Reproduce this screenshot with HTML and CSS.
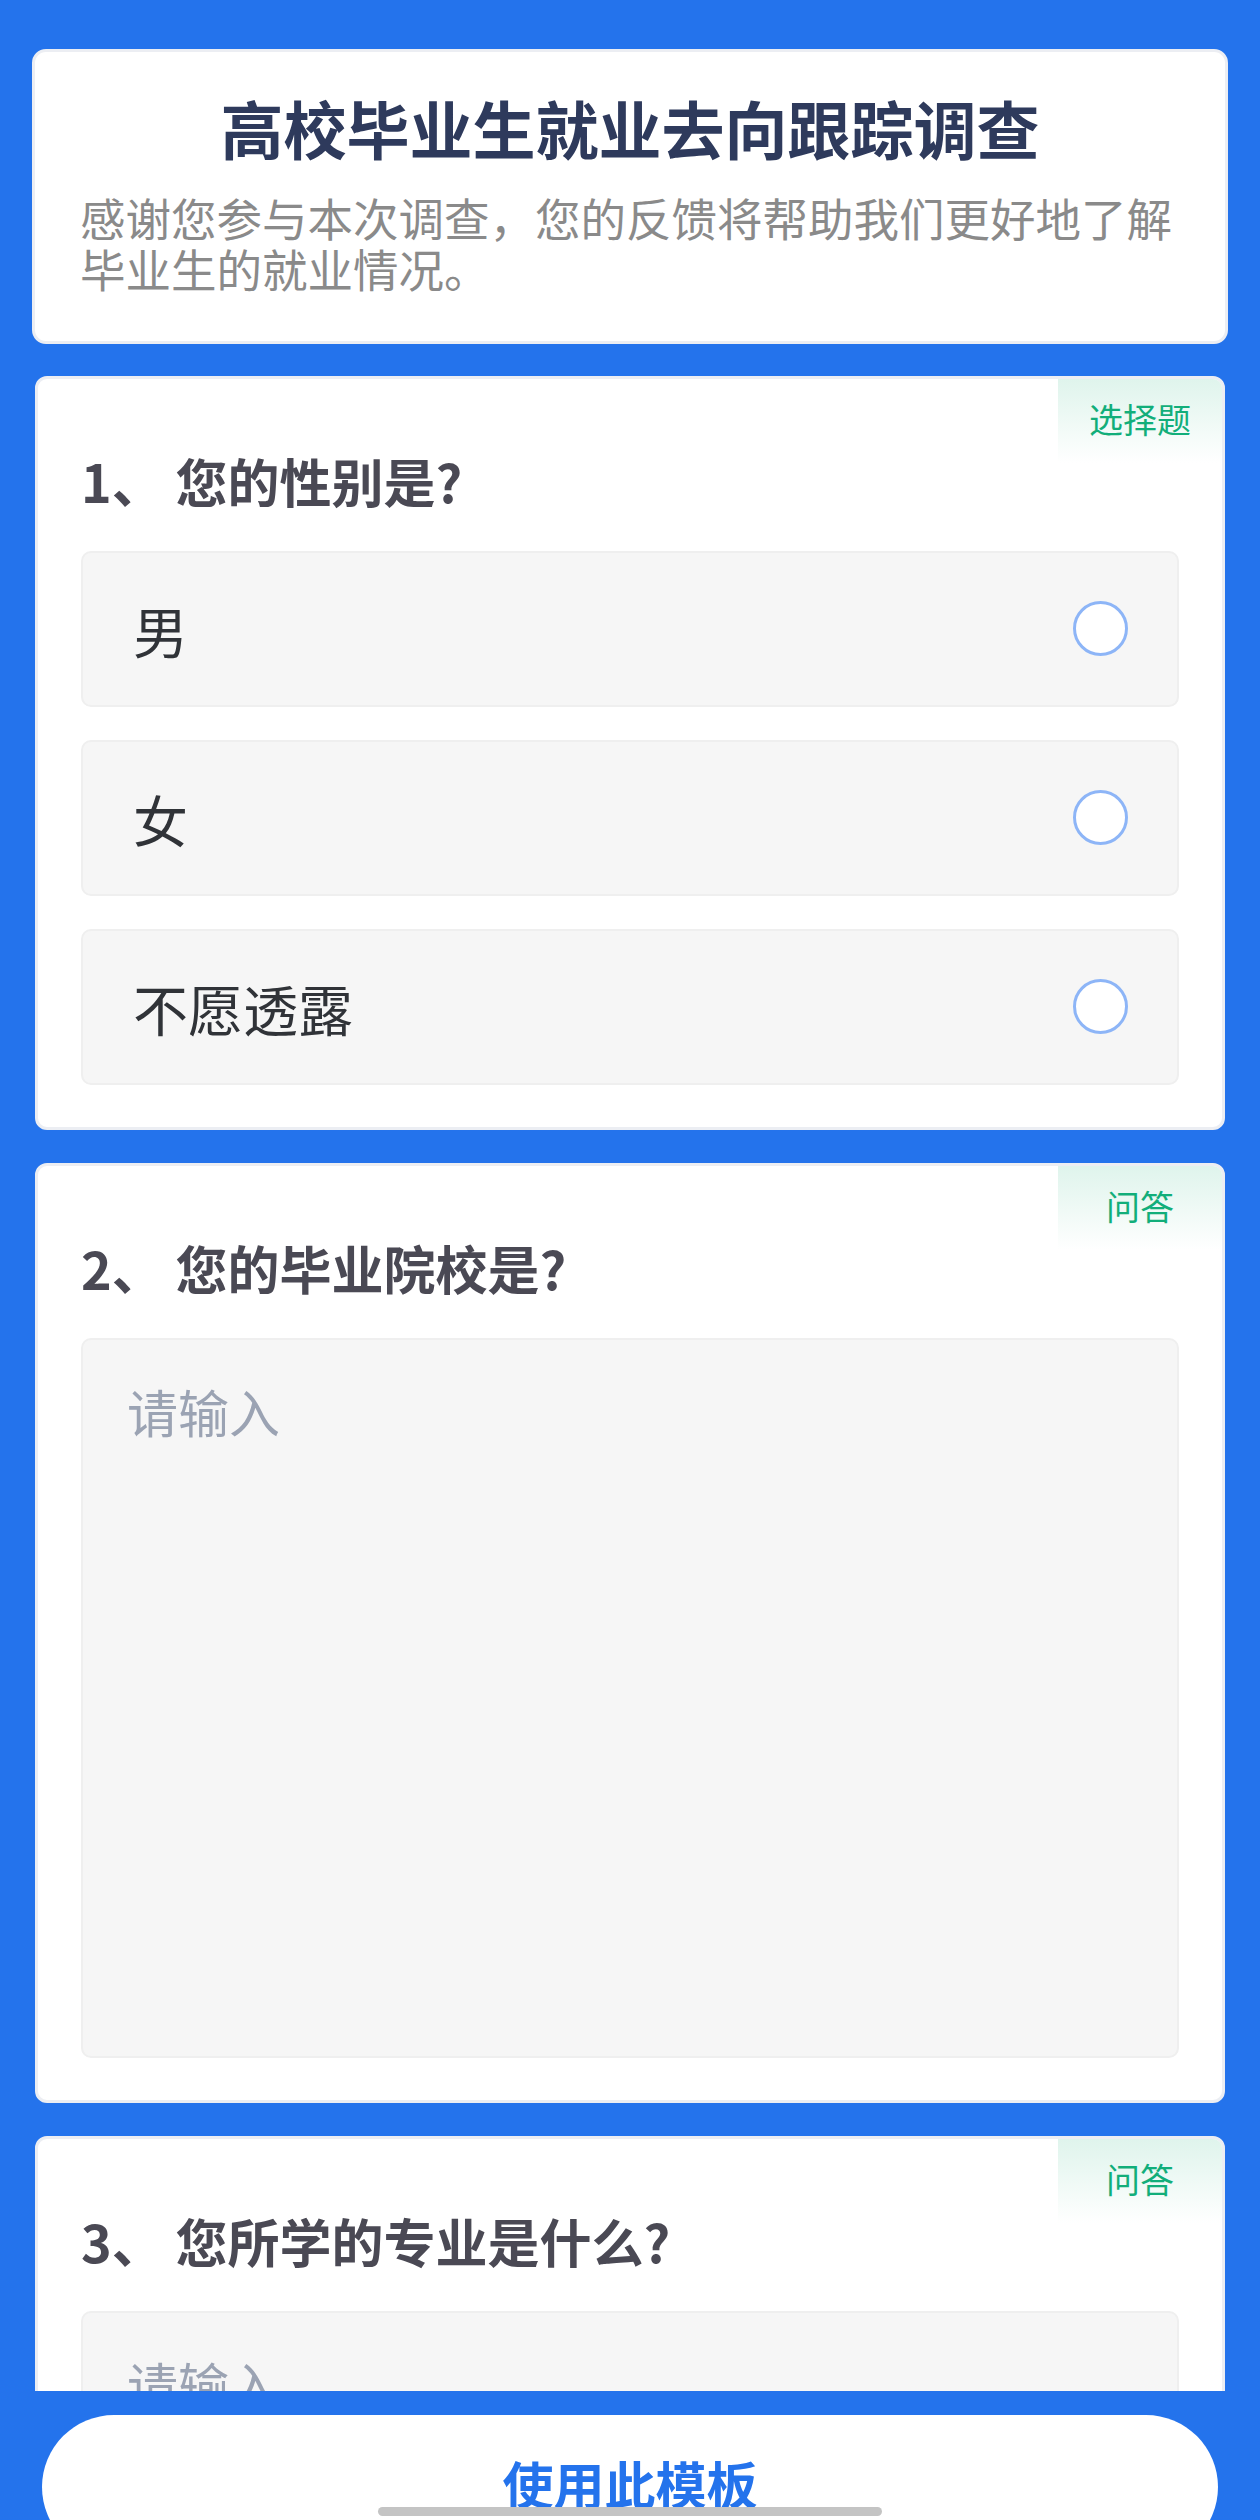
FILE: index.html
```html
<!DOCTYPE html>
<html lang="zh-CN">
<head>
  <meta charset="UTF-8">
  <meta name="viewport" content="width=device-width, initial-scale=1.0">
  <title>高校毕业生就业去向跟踪调查</title>
  <link rel="stylesheet" href="styles.css">
</head>
<body>
  <main class="survey">
    <!-- Header -->
    <section class="intro-card">
      <h1 class="intro-title">高校毕业生就业去向跟踪调查</h1>
      <p class="intro-desc">感谢您参与本次调查，您的反馈将帮助我们更好地了解毕业生的就业情况。</p>
    </section>

    <!-- Question 1 -->
    <section class="question-card">
      <span class="question-tag">选择题</span>
      <h2 class="question-title">1、 您的性别是?</h2>
      <div class="option-list">
        <label class="option">
          <span class="option-text">男</span>
          <span class="radio"></span>
        </label>
        <label class="option">
          <span class="option-text">女</span>
          <span class="radio"></span>
        </label>
        <label class="option">
          <span class="option-text">不愿透露</span>
          <span class="radio"></span>
        </label>
      </div>
    </section>

    <!-- Question 2 -->
    <section class="question-card">
      <span class="question-tag">问答</span>
      <h2 class="question-title">2、 您的毕业院校是?</h2>
      <textarea class="answer" placeholder="请输入"></textarea>
    </section>

    <!-- Question 3 -->
    <section class="question-card">
      <span class="question-tag">问答</span>
      <h2 class="question-title">3、 您所学的专业是什么?</h2>
      <textarea class="answer" placeholder="请输入"></textarea>
    </section>
  </main>

  <footer class="bottom-bar">
    <button class="use-btn">使用此模板</button>
    <span class="home-indicator"></span>
  </footer>
</body>
</html>
```

FILE: styles.css
```css
* { box-sizing: border-box; }
html, body { margin: 0; padding: 0; }
body { height: 2520px; overflow: hidden; background-color: #2473ec; font-family: "Noto Sans CJK SC", "Noto Sans", sans-serif; display: flex; flex-direction: column; }

.survey { height: 2391px; flex: none; overflow: hidden; padding: 49px 0 0; display: flex; flex-direction: column; gap: 33px; }

.intro-card { margin: 0 32px -1px; padding: 37px 45px 47px; background-color: #fff; border: 3px solid #eceef3; border-radius: 14px; }
.intro-title { margin: 0 0 27px; font-size: 63px; line-height: 1.2; font-weight: 700; color: #2e3a5c; text-align: center; }
.intro-desc { margin: 0; font-size: 45.5px; line-height: 51px; color: #8a8a8a; }

.question-card { position: relative; flex: none; margin: 0 35px; padding: 66px 43px 42px; background-color: #fff; border: 3px solid #eceef3; border-radius: 12px; }
.question-tag { position: absolute; top: 0; right: 0; width: 164px; height: 84px; line-height: 80px; text-align: center; font-size: 34px; color: #12ae7a; background: linear-gradient(to bottom, #dff4ec, rgba(255, 255, 255, 0)); border-top-right-radius: 9px; }
.question-title { margin: 0 0 34px; font-size: 52px; line-height: 72px; font-weight: 700; color: #4a4954; }

.option-list { display: flex; flex-direction: column; gap: 33px; }
.option { display: flex; align-items: center; justify-content: space-between; height: 156px; padding: 0 49px 0 50px; background-color: #f6f6f6; border: 2px solid #efefef; border-radius: 10px; }
.option-text { font-size: 55px; color: #303338; }
.radio { width: 55px; height: 55px; border: 3px solid #8db5f7; border-radius: 50%; background-color: #fff; }

.answer { display: block; width: 100%; height: 720px; padding: 36px 44px; resize: none; background-color: #f6f6f6; border: 2px solid #efefef; border-radius: 10px; font-family: inherit; font-size: 51px; line-height: 1.4; color: #333; outline: none; }
.answer::placeholder { color: #9ba3b3; }

.bottom-bar { position: relative; flex: none; height: 129px; overflow: hidden; padding: 24px 42px 0; }
.use-btn { display: block; width: 100%; height: 144px; padding: 0 0 8px; border: none; border-radius: 72px; background-color: #fff; font-family: inherit; font-size: 51px; line-height: 1; font-weight: 700; color: #2473ec; cursor: pointer; }
.home-indicator { position: absolute; left: 378px; bottom: 4px; width: 504px; height: 9px; border-radius: 5px; background-color: #c4c4c4; }
```
